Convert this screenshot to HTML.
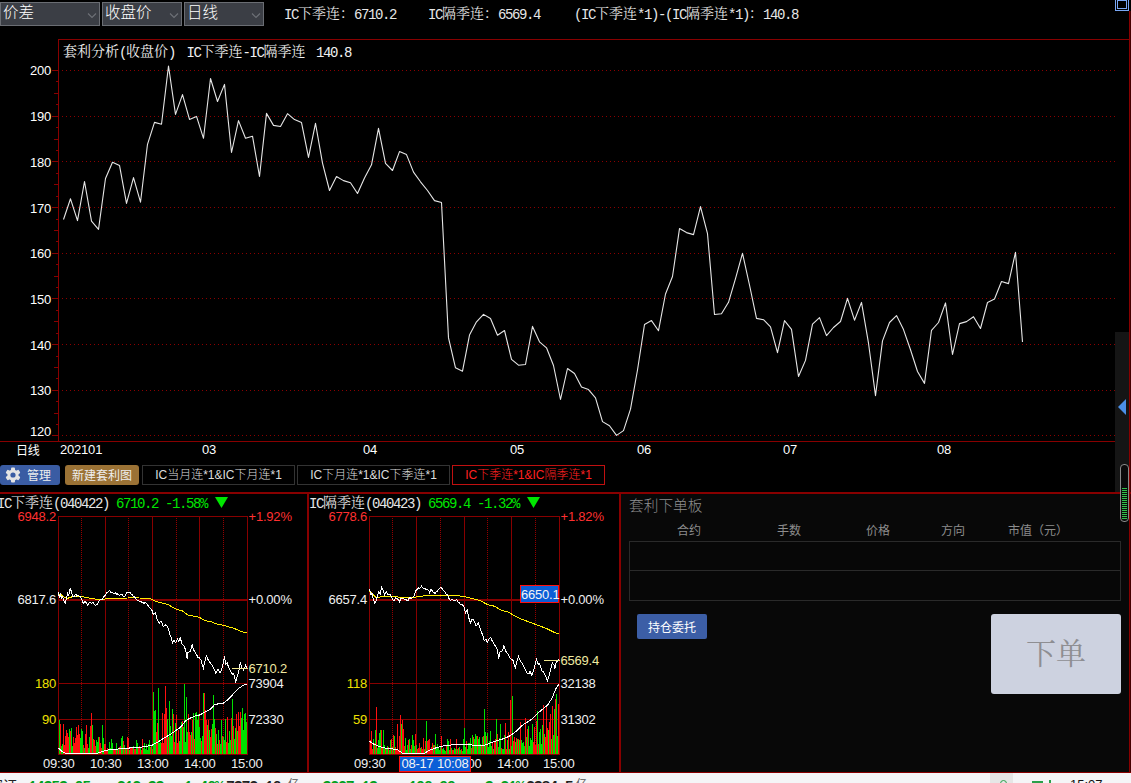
<!DOCTYPE html><html><head><meta charset="utf-8"><title>套利分析</title><style>
html,body{margin:0;padding:0;background:#000;}
body{width:1131px;height:783px;overflow:hidden;position:relative;font-family:"Liberation Sans","Noto Sans CJK SC",sans-serif;color:#fff;}
.t{position:absolute;white-space:nowrap;line-height:1;}
.s{font-family:"Liberation Mono","Noto Serif CJK SC",monospace;font-size:14px;}
.s .a{font-family:"Liberation Mono",monospace;letter-spacing:-1.4px;position:relative;top:1px;}
.ar{font-family:"Liberation Sans","Noto Sans CJK SC",sans-serif;font-size:13px;letter-spacing:-0.2px;}
.sel{position:absolute;top:2px;height:22px;background:#3b3e45;border:1px solid #6a6d73;box-sizing:content-box;font-size:15.5px;line-height:20px;color:#fff;font-weight:300;}
.sel span{position:absolute;left:2px;top:0px;}
.sel svg{position:absolute;right:2px;top:10px;}
.btn{position:absolute;border-radius:2px;font-size:12px;text-align:center;color:#eee;box-sizing:border-box;}
.tab{position:absolute;top:465px;height:20px;box-sizing:border-box;border:1px solid #333;font-size:12px;line-height:19px;text-align:center;color:#ddd;font-weight:300;}
svg.g{position:absolute;left:0;top:0;}
</style></head><body>
<div style="position:absolute;left:621px;top:494px;width:508px;height:278px;background:#080808"></div>
<svg class="g" width="1131" height="783" viewBox="0 0 1131 783" shape-rendering="crispEdges"><line x1="62" x2="1115" y1="70.5" y2="70.5" stroke="#8c0000" stroke-width="1" stroke-dasharray="1 3"/>
<line x1="52" x2="58" y1="70.5" y2="70.5" stroke="#880000" stroke-width="1"/>
<line x1="62" x2="1115" y1="116.5" y2="116.5" stroke="#8c0000" stroke-width="1" stroke-dasharray="1 3"/>
<line x1="52" x2="58" y1="116.5" y2="116.5" stroke="#880000" stroke-width="1"/>
<line x1="56" x2="58" y1="104.5" y2="104.5" stroke="#880000" stroke-width="1"/>
<line x1="54" x2="58" y1="93.5" y2="93.5" stroke="#880000" stroke-width="1"/>
<line x1="56" x2="58" y1="81.5" y2="81.5" stroke="#880000" stroke-width="1"/>
<line x1="62" x2="1115" y1="161.5" y2="161.5" stroke="#8c0000" stroke-width="1" stroke-dasharray="1 3"/>
<line x1="52" x2="58" y1="161.5" y2="161.5" stroke="#880000" stroke-width="1"/>
<line x1="56" x2="58" y1="150.5" y2="150.5" stroke="#880000" stroke-width="1"/>
<line x1="54" x2="58" y1="139.5" y2="139.5" stroke="#880000" stroke-width="1"/>
<line x1="56" x2="58" y1="127.5" y2="127.5" stroke="#880000" stroke-width="1"/>
<line x1="62" x2="1115" y1="207.5" y2="207.5" stroke="#8c0000" stroke-width="1" stroke-dasharray="1 3"/>
<line x1="52" x2="58" y1="207.5" y2="207.5" stroke="#880000" stroke-width="1"/>
<line x1="56" x2="58" y1="196.5" y2="196.5" stroke="#880000" stroke-width="1"/>
<line x1="54" x2="58" y1="184.5" y2="184.5" stroke="#880000" stroke-width="1"/>
<line x1="56" x2="58" y1="173.5" y2="173.5" stroke="#880000" stroke-width="1"/>
<line x1="62" x2="1115" y1="253.5" y2="253.5" stroke="#8c0000" stroke-width="1" stroke-dasharray="1 3"/>
<line x1="52" x2="58" y1="253.5" y2="253.5" stroke="#880000" stroke-width="1"/>
<line x1="56" x2="58" y1="241.5" y2="241.5" stroke="#880000" stroke-width="1"/>
<line x1="54" x2="58" y1="230.5" y2="230.5" stroke="#880000" stroke-width="1"/>
<line x1="56" x2="58" y1="219.5" y2="219.5" stroke="#880000" stroke-width="1"/>
<line x1="62" x2="1115" y1="298.5" y2="298.5" stroke="#8c0000" stroke-width="1" stroke-dasharray="1 3"/>
<line x1="52" x2="58" y1="298.5" y2="298.5" stroke="#880000" stroke-width="1"/>
<line x1="56" x2="58" y1="287.5" y2="287.5" stroke="#880000" stroke-width="1"/>
<line x1="54" x2="58" y1="276.5" y2="276.5" stroke="#880000" stroke-width="1"/>
<line x1="56" x2="58" y1="264.5" y2="264.5" stroke="#880000" stroke-width="1"/>
<line x1="62" x2="1115" y1="344.5" y2="344.5" stroke="#8c0000" stroke-width="1" stroke-dasharray="1 3"/>
<line x1="52" x2="58" y1="344.5" y2="344.5" stroke="#880000" stroke-width="1"/>
<line x1="56" x2="58" y1="333.5" y2="333.5" stroke="#880000" stroke-width="1"/>
<line x1="54" x2="58" y1="321.5" y2="321.5" stroke="#880000" stroke-width="1"/>
<line x1="56" x2="58" y1="310.5" y2="310.5" stroke="#880000" stroke-width="1"/>
<line x1="62" x2="1115" y1="390.5" y2="390.5" stroke="#8c0000" stroke-width="1" stroke-dasharray="1 3"/>
<line x1="52" x2="58" y1="390.5" y2="390.5" stroke="#880000" stroke-width="1"/>
<line x1="56" x2="58" y1="378.5" y2="378.5" stroke="#880000" stroke-width="1"/>
<line x1="54" x2="58" y1="367.5" y2="367.5" stroke="#880000" stroke-width="1"/>
<line x1="56" x2="58" y1="356.5" y2="356.5" stroke="#880000" stroke-width="1"/>
<line x1="62" x2="1115" y1="435.5" y2="435.5" stroke="#8c0000" stroke-width="1" stroke-dasharray="1 3"/>
<line x1="52" x2="58" y1="435.5" y2="435.5" stroke="#880000" stroke-width="1"/>
<line x1="56" x2="58" y1="424.5" y2="424.5" stroke="#880000" stroke-width="1"/>
<line x1="54" x2="58" y1="413.5" y2="413.5" stroke="#880000" stroke-width="1"/>
<line x1="56" x2="58" y1="401.5" y2="401.5" stroke="#880000" stroke-width="1"/>
<line x1="58.5" x2="58.5" y1="39" y2="441" stroke="#880000" stroke-width="1"/>
<line x1="58" x2="1131" y1="39.5" y2="39.5" stroke="#880000" stroke-width="1"/>
<line x1="0" x2="1115" y1="441.5" y2="441.5" stroke="#880000" stroke-width="1"/>
<rect x="1129" y="11" width="1" height="762" fill="#880000"/>
<rect x="1130" y="11" width="1" height="762" fill="#440000"/>
<polyline points="63.5,219.5 70.5,198.8 77.5,220.6 84.5,181.5 91.5,221.1 98.5,229.4 105.5,178.5 112.5,162.2 119.5,165.4 126.5,203.4 133.5,177.6 140.5,202.2 147.5,144.3 154.5,122.4 161.5,124.2 168.5,66.0 175.5,114.4 182.5,94.6 189.5,119.4 196.5,116.4 203.5,138.3 210.5,78.5 217.5,101.5 224.5,84.4 231.5,152.5 238.5,120.6 245.5,138.3 252.5,136.2 259.5,176.5 266.5,113.4 273.5,125.4 280.5,126.5 287.5,113.7 294.5,119.6 301.5,122.6 308.5,157.4 315.5,123.3 322.5,163.1 329.5,190.5 336.5,176.5 343.5,180.6 350.5,182.7 357.5,193.5 364.5,177.9 371.5,164.8 378.5,128.4 385.5,163.4 392.5,170.5 399.5,151.6 406.5,154.6 413.5,172.1 420.5,181.8 427.5,190.5 434.5,200.6 441.5,202.5 448.5,337.9 455.5,367.8 462.5,371.2 469.5,335.1 476.5,321.8 483.5,314.4 490.5,318.5 497.5,335.3 504.5,330.5 511.5,359.3 518.5,365.2 525.5,364.5 532.5,326.4 539.5,341.8 546.5,347.8 553.5,365.5 560.5,399.5 567.5,368.5 574.5,373.5 581.5,386.9 588.5,389.6 595.5,397.9 602.5,421.6 609.5,425.7 616.5,435.4 623.5,430.6 630.5,409.2 637.5,370.0 644.5,324.5 651.5,320.6 658.5,330.7 665.5,294.0 672.5,276.5 679.5,228.6 686.5,232.6 693.5,234.6 700.5,206.6 707.5,233.7 714.5,314.5 721.5,313.8 728.5,302.3 735.5,278.6 742.5,253.3 749.5,285.0 756.5,318.4 763.5,319.7 770.5,326.9 777.5,352.6 784.5,320.6 791.5,329.4 798.5,376.5 805.5,360.4 812.5,324.1 819.5,317.6 826.5,335.6 833.5,327.5 840.5,321.5 847.5,298.3 854.5,320.2 861.5,302.4 868.5,343.2 875.5,395.6 882.5,340.9 889.5,322.5 896.5,315.6 903.5,329.6 910.5,349.8 917.5,371.5 924.5,383.4 931.5,330.3 938.5,322.5 945.5,302.9 952.5,354.5 959.5,323.6 966.5,321.6 973.5,316.7 980.5,328.5 987.5,302.5 994.5,299.0 1001.5,281.5 1008.5,283.6 1015.5,252.3 1022.5,342.0" fill="none" stroke="#e6e6e6" stroke-width="1.1" shape-rendering="geometricPrecision" stroke-linejoin="round"/>
<rect x="1115" y="332" width="14" height="160" fill="#151515"/>
<polygon points="1118,407 1126,399 1126,415" fill="#4a8fe8" shape-rendering="geometricPrecision"/>
<rect x="0" y="492" width="1131" height="2" fill="#880000"/>
<rect x="1120.5" y="464.5" width="8" height="57" rx="3.5" fill="#0a0a0a" stroke="#8a8a8a" stroke-width="1" shape-rendering="geometricPrecision"/>
<rect x="1122" y="488" width="5" height="1" fill="#2fc24a"/>
<rect x="1122" y="490" width="5" height="1" fill="#2fc24a"/>
<rect x="1122" y="492" width="5" height="1" fill="#2fc24a"/>
<rect x="1122" y="494" width="5" height="1" fill="#2fc24a"/>
<rect x="1122" y="496" width="5" height="1" fill="#2fc24a"/>
<rect x="1122" y="498" width="5" height="1" fill="#2fc24a"/>
<rect x="1122" y="500" width="5" height="1" fill="#2fc24a"/>
<rect x="1122" y="502" width="5" height="1" fill="#2fc24a"/>
<rect x="1122" y="504" width="5" height="1" fill="#2fc24a"/>
<rect x="1122" y="506" width="5" height="1" fill="#2fc24a"/>
<rect x="1122" y="508" width="5" height="1" fill="#2fc24a"/>
<rect x="1122" y="510" width="5" height="1" fill="#2fc24a"/>
<rect x="1122" y="512" width="5" height="1" fill="#2fc24a"/>
<rect x="1122" y="514" width="5" height="1" fill="#2fc24a"/>
<rect x="1122" y="516" width="5" height="1" fill="#2fc24a"/>
<rect x="1122" y="518" width="5" height="1" fill="#2fc24a"/>
<rect x="1115.5" y="-0.5" width="13" height="11" fill="none" stroke="#7aa7f5" stroke-width="1"/>
<rect x="1117.5" y="0.5" width="9" height="8" fill="none" stroke="#7aa7f5" stroke-width="1"/>
<line x1="58.5" x2="58.5" y1="516.5" y2="754.5" stroke="#880000" stroke-width="1"/>
<line x1="81.5" x2="81.5" y1="516" y2="754.5" stroke="#940000" stroke-width="1" stroke-dasharray="1 1"/>
<line x1="105.5" x2="105.5" y1="516.5" y2="754.5" stroke="#880000" stroke-width="1"/>
<line x1="128.5" x2="128.5" y1="516" y2="754.5" stroke="#940000" stroke-width="1" stroke-dasharray="1 1"/>
<line x1="152.5" x2="152.5" y1="516.5" y2="754.5" stroke="#880000" stroke-width="1"/>
<line x1="176.5" x2="176.5" y1="516" y2="754.5" stroke="#940000" stroke-width="1" stroke-dasharray="1 1"/>
<line x1="199.5" x2="199.5" y1="516.5" y2="754.5" stroke="#880000" stroke-width="1"/>
<line x1="223.5" x2="223.5" y1="516" y2="754.5" stroke="#940000" stroke-width="1" stroke-dasharray="1 1"/>
<line x1="247.5" x2="247.5" y1="516.5" y2="754.5" stroke="#880000" stroke-width="1"/>
<line x1="58" x2="248" y1="516.5" y2="516.5" stroke="#880000" stroke-width="1"/>
<rect x="58" y="599" width="190" height="2" fill="#880000"/>
<line x1="58" x2="248" y1="683.5" y2="683.5" stroke="#880000" stroke-width="1"/>
<line x1="58" x2="248" y1="719.5" y2="719.5" stroke="#880000" stroke-width="1"/>
<line x1="58" x2="248" y1="754.5" y2="754.5" stroke="#880000" stroke-width="1"/>
<rect x="59" y="720" width="1" height="34" fill="#00e000"/>
<rect x="60" y="724" width="1" height="30" fill="#ff1010"/>
<rect x="61" y="746" width="1" height="8" fill="#00e000"/>
<rect x="62" y="744" width="1" height="10" fill="#00e000"/>
<rect x="63" y="724" width="1" height="30" fill="#ff1010"/>
<rect x="64" y="745" width="1" height="9" fill="#ff1010"/>
<rect x="65" y="736" width="1" height="18" fill="#ff1010"/>
<rect x="66" y="730" width="1" height="24" fill="#ff1010"/>
<rect x="67" y="733" width="1" height="21" fill="#ff1010"/>
<rect x="68" y="737" width="1" height="17" fill="#ff1010"/>
<rect x="69" y="729" width="1" height="25" fill="#00e000"/>
<rect x="70" y="731" width="1" height="23" fill="#ff1010"/>
<rect x="71" y="728" width="1" height="26" fill="#00e000"/>
<rect x="72" y="746" width="1" height="8" fill="#00e000"/>
<rect x="73" y="737" width="1" height="17" fill="#ff1010"/>
<rect x="74" y="743" width="1" height="11" fill="#ff1010"/>
<rect x="75" y="738" width="1" height="16" fill="#ff1010"/>
<rect x="76" y="727" width="1" height="27" fill="#ff1010"/>
<rect x="77" y="735" width="1" height="19" fill="#ff1010"/>
<rect x="78" y="725" width="1" height="29" fill="#ff1010"/>
<rect x="79" y="734" width="1" height="20" fill="#ff1010"/>
<rect x="80" y="738" width="1" height="16" fill="#00e000"/>
<rect x="81" y="729" width="1" height="25" fill="#00e000"/>
<rect x="82" y="731" width="1" height="23" fill="#00e000"/>
<rect x="83" y="745" width="1" height="9" fill="#ff1010"/>
<rect x="84" y="748" width="1" height="6" fill="#00e000"/>
<rect x="85" y="734" width="1" height="20" fill="#ff1010"/>
<rect x="86" y="725" width="1" height="29" fill="#ff1010"/>
<rect x="87" y="744" width="1" height="10" fill="#ff1010"/>
<rect x="88" y="748" width="1" height="6" fill="#00e000"/>
<rect x="89" y="737" width="1" height="17" fill="#00e000"/>
<rect x="90" y="726" width="1" height="28" fill="#ff1010"/>
<rect x="91" y="713" width="1" height="41" fill="#ff1010"/>
<rect x="92" y="725" width="1" height="29" fill="#00e000"/>
<rect x="93" y="739" width="1" height="15" fill="#ff1010"/>
<rect x="94" y="740" width="1" height="14" fill="#ff1010"/>
<rect x="95" y="746" width="1" height="8" fill="#ff1010"/>
<rect x="96" y="740" width="1" height="14" fill="#00e000"/>
<rect x="97" y="742" width="1" height="12" fill="#00e000"/>
<rect x="98" y="737" width="1" height="17" fill="#00e000"/>
<rect x="99" y="737" width="1" height="17" fill="#ff1010"/>
<rect x="100" y="743" width="1" height="11" fill="#ff1010"/>
<rect x="101" y="748" width="1" height="6" fill="#ff1010"/>
<rect x="102" y="725" width="1" height="29" fill="#00e000"/>
<rect x="103" y="738" width="1" height="16" fill="#00e000"/>
<rect x="104" y="744" width="1" height="10" fill="#ff1010"/>
<rect x="105" y="744" width="1" height="10" fill="#ff1010"/>
<rect x="106" y="750" width="1" height="4" fill="#ff1010"/>
<rect x="107" y="748" width="1" height="6" fill="#ff1010"/>
<rect x="108" y="749" width="1" height="5" fill="#00e000"/>
<rect x="109" y="742" width="1" height="12" fill="#00e000"/>
<rect x="110" y="748" width="1" height="6" fill="#00e000"/>
<rect x="111" y="739" width="1" height="15" fill="#00e000"/>
<rect x="112" y="743" width="1" height="11" fill="#00e000"/>
<rect x="113" y="749" width="1" height="5" fill="#ff1010"/>
<rect x="114" y="749" width="1" height="5" fill="#ff1010"/>
<rect x="115" y="749" width="1" height="5" fill="#ff1010"/>
<rect x="116" y="743" width="1" height="11" fill="#00e000"/>
<rect x="117" y="750" width="1" height="4" fill="#ff1010"/>
<rect x="118" y="748" width="1" height="6" fill="#00e000"/>
<rect x="119" y="747" width="1" height="7" fill="#ff1010"/>
<rect x="120" y="746" width="1" height="8" fill="#ff1010"/>
<rect x="121" y="738" width="1" height="16" fill="#00e000"/>
<rect x="122" y="736" width="1" height="18" fill="#00e000"/>
<rect x="123" y="741" width="1" height="13" fill="#ff1010"/>
<rect x="124" y="745" width="1" height="9" fill="#00e000"/>
<rect x="125" y="749" width="1" height="5" fill="#ff1010"/>
<rect x="126" y="748" width="1" height="6" fill="#00e000"/>
<rect x="127" y="737" width="1" height="17" fill="#ff1010"/>
<rect x="128" y="738" width="1" height="16" fill="#ff1010"/>
<rect x="129" y="750" width="1" height="4" fill="#00e000"/>
<rect x="130" y="748" width="1" height="6" fill="#ff1010"/>
<rect x="131" y="747" width="1" height="7" fill="#ff1010"/>
<rect x="132" y="748" width="1" height="6" fill="#ff1010"/>
<rect x="133" y="746" width="1" height="8" fill="#00e000"/>
<rect x="134" y="749" width="1" height="5" fill="#ff1010"/>
<rect x="135" y="749" width="1" height="5" fill="#ff1010"/>
<rect x="136" y="740" width="1" height="14" fill="#00e000"/>
<rect x="137" y="743" width="1" height="11" fill="#00e000"/>
<rect x="138" y="748" width="1" height="6" fill="#ff1010"/>
<rect x="139" y="746" width="1" height="8" fill="#ff1010"/>
<rect x="140" y="747" width="1" height="7" fill="#00e000"/>
<rect x="141" y="750" width="1" height="4" fill="#ff1010"/>
<rect x="142" y="739" width="1" height="15" fill="#ff1010"/>
<rect x="143" y="748" width="1" height="6" fill="#00e000"/>
<rect x="144" y="743" width="1" height="11" fill="#00e000"/>
<rect x="145" y="749" width="1" height="5" fill="#00e000"/>
<rect x="146" y="744" width="1" height="10" fill="#00e000"/>
<rect x="147" y="750" width="1" height="4" fill="#00e000"/>
<rect x="148" y="744" width="1" height="10" fill="#00e000"/>
<rect x="149" y="740" width="1" height="14" fill="#00e000"/>
<rect x="150" y="747" width="1" height="7" fill="#ff1010"/>
<rect x="151" y="746" width="1" height="8" fill="#00e000"/>
<rect x="152" y="749" width="1" height="5" fill="#ff1010"/>
<rect x="153" y="692" width="1" height="62" fill="#00e000"/>
<rect x="154" y="711" width="1" height="43" fill="#00e000"/>
<rect x="155" y="710" width="1" height="44" fill="#00e000"/>
<rect x="156" y="732" width="1" height="22" fill="#ff1010"/>
<rect x="157" y="723" width="1" height="31" fill="#ff1010"/>
<rect x="158" y="688" width="1" height="66" fill="#00e000"/>
<rect x="159" y="743" width="1" height="11" fill="#00e000"/>
<rect x="160" y="742" width="1" height="12" fill="#00e000"/>
<rect x="161" y="743" width="1" height="11" fill="#ff1010"/>
<rect x="162" y="713" width="1" height="41" fill="#ff1010"/>
<rect x="163" y="743" width="1" height="11" fill="#ff1010"/>
<rect x="164" y="714" width="1" height="40" fill="#ff1010"/>
<rect x="165" y="686" width="1" height="68" fill="#ff1010"/>
<rect x="166" y="708" width="1" height="46" fill="#ff1010"/>
<rect x="167" y="719" width="1" height="35" fill="#00e000"/>
<rect x="168" y="737" width="1" height="17" fill="#ff1010"/>
<rect x="169" y="701" width="1" height="53" fill="#00e000"/>
<rect x="170" y="726" width="1" height="28" fill="#00e000"/>
<rect x="171" y="736" width="1" height="18" fill="#00e000"/>
<rect x="172" y="709" width="1" height="45" fill="#00e000"/>
<rect x="173" y="714" width="1" height="40" fill="#ff1010"/>
<rect x="174" y="742" width="1" height="12" fill="#ff1010"/>
<rect x="175" y="723" width="1" height="31" fill="#00e000"/>
<rect x="176" y="715" width="1" height="39" fill="#ff1010"/>
<rect x="177" y="743" width="1" height="11" fill="#ff1010"/>
<rect x="178" y="730" width="1" height="24" fill="#ff1010"/>
<rect x="179" y="741" width="1" height="13" fill="#00e000"/>
<rect x="180" y="727" width="1" height="27" fill="#00e000"/>
<rect x="181" y="722" width="1" height="32" fill="#00e000"/>
<rect x="182" y="721" width="1" height="33" fill="#ff1010"/>
<rect x="183" y="727" width="1" height="27" fill="#00e000"/>
<rect x="184" y="684" width="1" height="70" fill="#00e000"/>
<rect x="185" y="742" width="1" height="12" fill="#00e000"/>
<rect x="186" y="697" width="1" height="57" fill="#00e000"/>
<rect x="187" y="732" width="1" height="22" fill="#00e000"/>
<rect x="188" y="714" width="1" height="40" fill="#ff1010"/>
<rect x="189" y="732" width="1" height="22" fill="#ff1010"/>
<rect x="190" y="735" width="1" height="19" fill="#ff1010"/>
<rect x="191" y="732" width="1" height="22" fill="#00e000"/>
<rect x="192" y="720" width="1" height="34" fill="#ff1010"/>
<rect x="193" y="713" width="1" height="41" fill="#00e000"/>
<rect x="194" y="739" width="1" height="15" fill="#ff1010"/>
<rect x="195" y="713" width="1" height="41" fill="#00e000"/>
<rect x="196" y="712" width="1" height="42" fill="#00e000"/>
<rect x="197" y="720" width="1" height="34" fill="#00e000"/>
<rect x="198" y="714" width="1" height="40" fill="#00e000"/>
<rect x="199" y="727" width="1" height="27" fill="#00e000"/>
<rect x="200" y="738" width="1" height="16" fill="#00e000"/>
<rect x="201" y="741" width="1" height="13" fill="#ff1010"/>
<rect x="202" y="736" width="1" height="18" fill="#00e000"/>
<rect x="203" y="693" width="1" height="61" fill="#00e000"/>
<rect x="204" y="693" width="1" height="61" fill="#ff1010"/>
<rect x="205" y="710" width="1" height="44" fill="#ff1010"/>
<rect x="206" y="720" width="1" height="34" fill="#ff1010"/>
<rect x="207" y="725" width="1" height="29" fill="#00e000"/>
<rect x="208" y="720" width="1" height="34" fill="#ff1010"/>
<rect x="209" y="730" width="1" height="24" fill="#00e000"/>
<rect x="210" y="737" width="1" height="17" fill="#ff1010"/>
<rect x="211" y="729" width="1" height="25" fill="#ff1010"/>
<rect x="212" y="724" width="1" height="30" fill="#00e000"/>
<rect x="213" y="695" width="1" height="59" fill="#00e000"/>
<rect x="214" y="719" width="1" height="35" fill="#00e000"/>
<rect x="215" y="728" width="1" height="26" fill="#ff1010"/>
<rect x="216" y="734" width="1" height="20" fill="#00e000"/>
<rect x="217" y="744" width="1" height="10" fill="#ff1010"/>
<rect x="218" y="730" width="1" height="24" fill="#00e000"/>
<rect x="219" y="740" width="1" height="14" fill="#ff1010"/>
<rect x="220" y="744" width="1" height="10" fill="#00e000"/>
<rect x="221" y="720" width="1" height="34" fill="#00e000"/>
<rect x="222" y="736" width="1" height="18" fill="#ff1010"/>
<rect x="223" y="737" width="1" height="17" fill="#00e000"/>
<rect x="224" y="740" width="1" height="14" fill="#00e000"/>
<rect x="225" y="719" width="1" height="35" fill="#00e000"/>
<rect x="226" y="742" width="1" height="12" fill="#ff1010"/>
<rect x="227" y="717" width="1" height="37" fill="#ff1010"/>
<rect x="228" y="743" width="1" height="11" fill="#00e000"/>
<rect x="229" y="731" width="1" height="23" fill="#00e000"/>
<rect x="230" y="740" width="1" height="14" fill="#00e000"/>
<rect x="231" y="718" width="1" height="36" fill="#ff1010"/>
<rect x="232" y="699" width="1" height="55" fill="#00e000"/>
<rect x="233" y="726" width="1" height="28" fill="#ff1010"/>
<rect x="234" y="739" width="1" height="15" fill="#00e000"/>
<rect x="235" y="728" width="1" height="26" fill="#00e000"/>
<rect x="236" y="714" width="1" height="40" fill="#ff1010"/>
<rect x="237" y="731" width="1" height="23" fill="#00e000"/>
<rect x="238" y="712" width="1" height="42" fill="#ff1010"/>
<rect x="239" y="726" width="1" height="28" fill="#ff1010"/>
<rect x="240" y="712" width="1" height="42" fill="#ff1010"/>
<rect x="241" y="718" width="1" height="36" fill="#00e000"/>
<rect x="242" y="708" width="1" height="46" fill="#00e000"/>
<rect x="243" y="730" width="1" height="24" fill="#00e000"/>
<rect x="244" y="714" width="1" height="40" fill="#00e000"/>
<rect x="245" y="713" width="1" height="41" fill="#00e000"/>
<rect x="246" y="722" width="1" height="32" fill="#00e000"/>
<polyline points="58.4,594.0 62.0,595.2 64.8,597.6 67.6,598.3 71.9,596.9 78.9,596.2 84.5,597.1 91.5,598.5 97.1,599.4 102.8,599.4 109.8,598.3 128.0,598.0 133.7,597.6 139.3,598.0 148.4,598.3 150.0,598.5 157.0,601.8 168.3,604.6 175.3,608.8 182.3,610.9 187.9,615.1 199.2,617.2 204.8,620.7 210.4,621.4 217.4,624.2 223.0,625.2 234.3,628.5 242.7,632.0 246.9,632.7" fill="none" stroke="#ffee00" stroke-width="1" shape-rendering="crispEdges"/>
<polyline points="58.4,591.9 59.2,597.6 60.3,594.0 61.5,598.3 62.7,596.9 64.1,601.1 65.5,603.2 66.5,597.6 67.6,593.3 68.8,595.4 70.2,587.7 71.6,592.6 72.6,596.2 74.0,596.9 75.8,594.0 76.8,596.2 78.6,595.4 80.3,596.9 81.7,599.0 82.7,602.1 83.8,603.2 85.2,601.1 86.4,603.1 87.6,605.3 89.4,602.5 91.2,603.2 92.9,602.5 94.3,604.4 95.7,605.3 96.8,604.7 97.8,603.2 98.9,601.1 99.9,600.4 101.0,599.1 102.1,599.7 103.5,596.9 104.5,596.0 105.6,594.7 106.6,592.9 107.7,592.6 109.5,590.5 111.2,592.6 112.2,592.7 113.3,593.3 114.3,593.8 115.4,592.6 116.4,594.2 117.5,594.0 119.3,595.4 121.0,594.0 122.1,594.3 123.1,596.2 124.5,596.9 125.9,594.0 127.0,592.4 128.0,592.6 129.1,592.0 130.1,592.6 131.2,594.4 132.2,594.7 133.7,596.9 134.7,596.9 135.8,599.0 136.8,599.4 137.9,601.1 138.9,600.6 140.0,601.8 141.0,601.3 142.1,602.5 143.1,602.9 144.2,603.2 145.2,602.5 146.3,603.2 147.3,604.4 148.4,606.0 149.5,607.5 150.5,608.1 151.9,610.9 153.3,614.4 152.1,610.2 153.5,614.4 155.3,613.0 157.0,618.6 158.1,621.6 159.1,623.5 161.0,620.7 162.1,623.4 163.3,626.3 165.2,624.9 166.9,625.6 168.3,628.5 169.7,634.1 171.1,637.6 172.5,643.2 173.9,640.4 175.6,642.5 177.4,639.0 178.8,641.8 180.2,636.9 181.6,643.2 182.7,644.9 183.7,645.3 185.1,648.8 186.2,653.0 187.2,658.7 187.9,652.3 189.0,652.1 190.0,651.6 191.1,648.8 192.1,644.6 193.5,650.2 194.6,651.1 195.6,653.0 196.7,654.9 197.8,657.2 199.2,657.9 200.2,659.2 201.3,660.1 202.3,665.3 203.4,668.5 204.8,661.5 206.5,655.8 208.3,660.1 209.3,661.7 210.4,662.9 211.4,664.2 212.5,665.7 214.3,669.9 216.0,673.4 217.1,670.7 218.1,669.2 219.8,672.7 221.6,669.9 223.0,664.3 224.4,656.5 225.8,664.3 227.2,662.9 228.7,667.8 229.7,669.1 230.8,671.3 232.2,674.1 233.6,673.4 234.6,677.3 235.7,682.5 237.1,676.9 238.8,671.3 240.2,662.9 242.0,667.8 243.4,669.9 244.5,668.5 245.5,665.0 246.9,667.8" fill="none" stroke="#ffffff" stroke-width="1" shape-rendering="crispEdges"/>
<polyline points="58.7,748.3 61.8,751.4 66.3,753.8 96.2,753.8 102.6,751.4 109.8,749.6 122.5,748.7 131.6,747.8 140.6,747.2 146.1,746.5 152.4,745.1 158.8,741.4 166.0,736.9 173.3,732.4 180.5,727.3 185.0,721.5 188.7,718.8 195.0,716.1 200.4,714.8 204.1,712.4 210.4,709.2 214.9,704.3 223.1,703.4 226.7,700.7 231.3,696.1 238.5,688.5 243.9,684.9 247.2,684.3" fill="none" stroke="#ffffff" stroke-width="1" shape-rendering="crispEdges"/>
<line x1="232" x2="248" y1="668.5" y2="668.5" stroke="#f0e68c" stroke-width="1"/>
<line x1="369.5" x2="369.5" y1="516.5" y2="754.5" stroke="#880000" stroke-width="1"/>
<line x1="392.5" x2="392.5" y1="516" y2="754.5" stroke="#940000" stroke-width="1" stroke-dasharray="1 1"/>
<line x1="416.5" x2="416.5" y1="516.5" y2="754.5" stroke="#880000" stroke-width="1"/>
<line x1="440.5" x2="440.5" y1="516" y2="754.5" stroke="#940000" stroke-width="1" stroke-dasharray="1 1"/>
<line x1="464.5" x2="464.5" y1="516.5" y2="754.5" stroke="#880000" stroke-width="1"/>
<line x1="487.5" x2="487.5" y1="516" y2="754.5" stroke="#940000" stroke-width="1" stroke-dasharray="1 1"/>
<line x1="511.5" x2="511.5" y1="516.5" y2="754.5" stroke="#880000" stroke-width="1"/>
<line x1="535.5" x2="535.5" y1="516" y2="754.5" stroke="#940000" stroke-width="1" stroke-dasharray="1 1"/>
<line x1="559.5" x2="559.5" y1="516.5" y2="754.5" stroke="#880000" stroke-width="1"/>
<line x1="369" x2="560" y1="516.5" y2="516.5" stroke="#880000" stroke-width="1"/>
<rect x="369" y="599" width="191" height="2" fill="#880000"/>
<line x1="369" x2="560" y1="683.5" y2="683.5" stroke="#880000" stroke-width="1"/>
<line x1="369" x2="560" y1="719.5" y2="719.5" stroke="#880000" stroke-width="1"/>
<line x1="369" x2="560" y1="754.5" y2="754.5" stroke="#880000" stroke-width="1"/>
<rect x="370" y="740" width="1" height="14" fill="#ff1010"/>
<rect x="371" y="731" width="1" height="23" fill="#ff1010"/>
<rect x="372" y="749" width="1" height="5" fill="#ff1010"/>
<rect x="373" y="739" width="1" height="15" fill="#00e000"/>
<rect x="374" y="743" width="1" height="11" fill="#ff1010"/>
<rect x="375" y="730" width="1" height="24" fill="#00e000"/>
<rect x="376" y="707" width="1" height="47" fill="#ff1010"/>
<rect x="377" y="748" width="1" height="6" fill="#00e000"/>
<rect x="378" y="740" width="1" height="14" fill="#00e000"/>
<rect x="379" y="733" width="1" height="21" fill="#00e000"/>
<rect x="380" y="730" width="1" height="24" fill="#00e000"/>
<rect x="381" y="730" width="1" height="24" fill="#ff1010"/>
<rect x="382" y="747" width="1" height="7" fill="#ff1010"/>
<rect x="383" y="730" width="1" height="24" fill="#00e000"/>
<rect x="384" y="745" width="1" height="9" fill="#00e000"/>
<rect x="385" y="749" width="1" height="5" fill="#ff1010"/>
<rect x="386" y="749" width="1" height="5" fill="#00e000"/>
<rect x="387" y="746" width="1" height="8" fill="#00e000"/>
<rect x="388" y="747" width="1" height="7" fill="#ff1010"/>
<rect x="389" y="750" width="1" height="4" fill="#00e000"/>
<rect x="390" y="740" width="1" height="14" fill="#00e000"/>
<rect x="391" y="739" width="1" height="15" fill="#ff1010"/>
<rect x="392" y="747" width="1" height="7" fill="#00e000"/>
<rect x="393" y="735" width="1" height="19" fill="#ff1010"/>
<rect x="394" y="736" width="1" height="18" fill="#00e000"/>
<rect x="395" y="747" width="1" height="7" fill="#ff1010"/>
<rect x="396" y="750" width="1" height="4" fill="#ff1010"/>
<rect x="397" y="724" width="1" height="30" fill="#ff1010"/>
<rect x="398" y="750" width="1" height="4" fill="#ff1010"/>
<rect x="399" y="736" width="1" height="18" fill="#ff1010"/>
<rect x="400" y="715" width="1" height="39" fill="#ff1010"/>
<rect x="401" y="724" width="1" height="30" fill="#00e000"/>
<rect x="402" y="720" width="1" height="34" fill="#ff1010"/>
<rect x="403" y="729" width="1" height="25" fill="#ff1010"/>
<rect x="404" y="746" width="1" height="8" fill="#ff1010"/>
<rect x="405" y="738" width="1" height="16" fill="#00e000"/>
<rect x="406" y="750" width="1" height="4" fill="#00e000"/>
<rect x="407" y="745" width="1" height="9" fill="#00e000"/>
<rect x="408" y="740" width="1" height="14" fill="#ff1010"/>
<rect x="409" y="739" width="1" height="15" fill="#00e000"/>
<rect x="410" y="749" width="1" height="5" fill="#00e000"/>
<rect x="411" y="745" width="1" height="9" fill="#ff1010"/>
<rect x="412" y="735" width="1" height="19" fill="#00e000"/>
<rect x="413" y="740" width="1" height="14" fill="#00e000"/>
<rect x="414" y="746" width="1" height="8" fill="#00e000"/>
<rect x="415" y="734" width="1" height="20" fill="#ff1010"/>
<rect x="416" y="745" width="1" height="9" fill="#00e000"/>
<rect x="417" y="749" width="1" height="5" fill="#ff1010"/>
<rect x="418" y="748" width="1" height="6" fill="#ff1010"/>
<rect x="419" y="743" width="1" height="11" fill="#ff1010"/>
<rect x="420" y="748" width="1" height="6" fill="#00e000"/>
<rect x="421" y="747" width="1" height="7" fill="#ff1010"/>
<rect x="422" y="749" width="1" height="5" fill="#ff1010"/>
<rect x="423" y="738" width="1" height="16" fill="#ff1010"/>
<rect x="424" y="749" width="1" height="5" fill="#00e000"/>
<rect x="425" y="741" width="1" height="13" fill="#ff1010"/>
<rect x="426" y="721" width="1" height="33" fill="#00e000"/>
<rect x="427" y="741" width="1" height="13" fill="#ff1010"/>
<rect x="428" y="740" width="1" height="14" fill="#ff1010"/>
<rect x="429" y="739" width="1" height="15" fill="#ff1010"/>
<rect x="430" y="750" width="1" height="4" fill="#ff1010"/>
<rect x="431" y="747" width="1" height="7" fill="#ff1010"/>
<rect x="432" y="743" width="1" height="11" fill="#ff1010"/>
<rect x="433" y="745" width="1" height="9" fill="#00e000"/>
<rect x="434" y="745" width="1" height="9" fill="#ff1010"/>
<rect x="435" y="734" width="1" height="20" fill="#00e000"/>
<rect x="436" y="747" width="1" height="7" fill="#00e000"/>
<rect x="437" y="744" width="1" height="10" fill="#00e000"/>
<rect x="438" y="747" width="1" height="7" fill="#00e000"/>
<rect x="439" y="750" width="1" height="4" fill="#00e000"/>
<rect x="440" y="746" width="1" height="8" fill="#00e000"/>
<rect x="441" y="736" width="1" height="18" fill="#ff1010"/>
<rect x="442" y="749" width="1" height="5" fill="#00e000"/>
<rect x="443" y="748" width="1" height="6" fill="#00e000"/>
<rect x="444" y="750" width="1" height="4" fill="#00e000"/>
<rect x="445" y="751" width="1" height="3" fill="#00e000"/>
<rect x="446" y="746" width="1" height="8" fill="#ff1010"/>
<rect x="447" y="739" width="1" height="15" fill="#00e000"/>
<rect x="448" y="741" width="1" height="13" fill="#00e000"/>
<rect x="449" y="750" width="1" height="4" fill="#ff1010"/>
<rect x="450" y="739" width="1" height="15" fill="#ff1010"/>
<rect x="451" y="748" width="1" height="6" fill="#00e000"/>
<rect x="452" y="750" width="1" height="4" fill="#ff1010"/>
<rect x="453" y="750" width="1" height="4" fill="#ff1010"/>
<rect x="454" y="748" width="1" height="6" fill="#00e000"/>
<rect x="455" y="749" width="1" height="5" fill="#00e000"/>
<rect x="456" y="739" width="1" height="15" fill="#ff1010"/>
<rect x="457" y="749" width="1" height="5" fill="#00e000"/>
<rect x="458" y="748" width="1" height="6" fill="#ff1010"/>
<rect x="459" y="747" width="1" height="7" fill="#00e000"/>
<rect x="460" y="750" width="1" height="4" fill="#00e000"/>
<rect x="461" y="749" width="1" height="5" fill="#ff1010"/>
<rect x="462" y="751" width="1" height="3" fill="#00e000"/>
<rect x="463" y="739" width="1" height="15" fill="#00e000"/>
<rect x="464" y="728" width="1" height="26" fill="#00e000"/>
<rect x="465" y="747" width="1" height="7" fill="#00e000"/>
<rect x="466" y="741" width="1" height="13" fill="#ff1010"/>
<rect x="467" y="749" width="1" height="5" fill="#00e000"/>
<rect x="468" y="743" width="1" height="11" fill="#00e000"/>
<rect x="469" y="743" width="1" height="11" fill="#00e000"/>
<rect x="470" y="738" width="1" height="16" fill="#00e000"/>
<rect x="471" y="748" width="1" height="6" fill="#ff1010"/>
<rect x="472" y="735" width="1" height="19" fill="#00e000"/>
<rect x="473" y="737" width="1" height="17" fill="#ff1010"/>
<rect x="474" y="739" width="1" height="15" fill="#00e000"/>
<rect x="475" y="734" width="1" height="20" fill="#00e000"/>
<rect x="476" y="736" width="1" height="18" fill="#00e000"/>
<rect x="477" y="736" width="1" height="18" fill="#ff1010"/>
<rect x="478" y="739" width="1" height="15" fill="#00e000"/>
<rect x="479" y="737" width="1" height="17" fill="#00e000"/>
<rect x="480" y="744" width="1" height="10" fill="#00e000"/>
<rect x="481" y="746" width="1" height="8" fill="#ff1010"/>
<rect x="482" y="737" width="1" height="17" fill="#00e000"/>
<rect x="483" y="736" width="1" height="18" fill="#ff1010"/>
<rect x="484" y="709" width="1" height="45" fill="#00e000"/>
<rect x="485" y="732" width="1" height="22" fill="#00e000"/>
<rect x="486" y="736" width="1" height="18" fill="#ff1010"/>
<rect x="487" y="733" width="1" height="21" fill="#00e000"/>
<rect x="488" y="747" width="1" height="7" fill="#00e000"/>
<rect x="489" y="741" width="1" height="13" fill="#00e000"/>
<rect x="490" y="731" width="1" height="23" fill="#00e000"/>
<rect x="491" y="746" width="1" height="8" fill="#00e000"/>
<rect x="492" y="742" width="1" height="12" fill="#ff1010"/>
<rect x="493" y="749" width="1" height="5" fill="#00e000"/>
<rect x="494" y="742" width="1" height="12" fill="#ff1010"/>
<rect x="495" y="739" width="1" height="15" fill="#ff1010"/>
<rect x="496" y="719" width="1" height="35" fill="#00e000"/>
<rect x="497" y="734" width="1" height="20" fill="#ff1010"/>
<rect x="498" y="747" width="1" height="7" fill="#00e000"/>
<rect x="499" y="738" width="1" height="16" fill="#00e000"/>
<rect x="500" y="724" width="1" height="30" fill="#00e000"/>
<rect x="501" y="748" width="1" height="6" fill="#ff1010"/>
<rect x="502" y="749" width="1" height="5" fill="#00e000"/>
<rect x="503" y="749" width="1" height="5" fill="#00e000"/>
<rect x="504" y="735" width="1" height="19" fill="#00e000"/>
<rect x="505" y="723" width="1" height="31" fill="#ff1010"/>
<rect x="506" y="749" width="1" height="5" fill="#ff1010"/>
<rect x="507" y="740" width="1" height="14" fill="#00e000"/>
<rect x="508" y="732" width="1" height="22" fill="#ff1010"/>
<rect x="509" y="749" width="1" height="5" fill="#00e000"/>
<rect x="510" y="700" width="1" height="54" fill="#ff1010"/>
<rect x="511" y="746" width="1" height="8" fill="#00e000"/>
<rect x="512" y="696" width="1" height="58" fill="#00e000"/>
<rect x="513" y="741" width="1" height="13" fill="#ff1010"/>
<rect x="514" y="737" width="1" height="17" fill="#ff1010"/>
<rect x="515" y="742" width="1" height="12" fill="#00e000"/>
<rect x="516" y="738" width="1" height="16" fill="#ff1010"/>
<rect x="517" y="739" width="1" height="15" fill="#00e000"/>
<rect x="518" y="739" width="1" height="15" fill="#ff1010"/>
<rect x="519" y="740" width="1" height="14" fill="#00e000"/>
<rect x="520" y="722" width="1" height="32" fill="#ff1010"/>
<rect x="521" y="740" width="1" height="14" fill="#00e000"/>
<rect x="522" y="743" width="1" height="11" fill="#00e000"/>
<rect x="523" y="742" width="1" height="12" fill="#00e000"/>
<rect x="524" y="746" width="1" height="8" fill="#00e000"/>
<rect x="525" y="718" width="1" height="36" fill="#ff1010"/>
<rect x="526" y="737" width="1" height="17" fill="#00e000"/>
<rect x="527" y="729" width="1" height="25" fill="#ff1010"/>
<rect x="528" y="726" width="1" height="28" fill="#00e000"/>
<rect x="529" y="746" width="1" height="8" fill="#00e000"/>
<rect x="530" y="738" width="1" height="16" fill="#00e000"/>
<rect x="531" y="740" width="1" height="14" fill="#00e000"/>
<rect x="532" y="724" width="1" height="30" fill="#00e000"/>
<rect x="533" y="742" width="1" height="12" fill="#ff1010"/>
<rect x="534" y="727" width="1" height="27" fill="#ff1010"/>
<rect x="535" y="745" width="1" height="9" fill="#ff1010"/>
<rect x="536" y="721" width="1" height="33" fill="#ff1010"/>
<rect x="537" y="711" width="1" height="43" fill="#00e000"/>
<rect x="538" y="744" width="1" height="10" fill="#ff1010"/>
<rect x="539" y="732" width="1" height="22" fill="#00e000"/>
<rect x="540" y="729" width="1" height="25" fill="#00e000"/>
<rect x="541" y="744" width="1" height="10" fill="#00e000"/>
<rect x="542" y="725" width="1" height="29" fill="#00e000"/>
<rect x="543" y="705" width="1" height="49" fill="#ff1010"/>
<rect x="544" y="734" width="1" height="20" fill="#00e000"/>
<rect x="545" y="737" width="1" height="17" fill="#ff1010"/>
<rect x="546" y="706" width="1" height="48" fill="#ff1010"/>
<rect x="547" y="728" width="1" height="26" fill="#ff1010"/>
<rect x="548" y="730" width="1" height="24" fill="#00e000"/>
<rect x="549" y="722" width="1" height="32" fill="#ff1010"/>
<rect x="550" y="714" width="1" height="40" fill="#ff1010"/>
<rect x="551" y="739" width="1" height="15" fill="#00e000"/>
<rect x="552" y="706" width="1" height="48" fill="#ff1010"/>
<rect x="553" y="735" width="1" height="19" fill="#00e000"/>
<rect x="554" y="709" width="1" height="45" fill="#00e000"/>
<rect x="555" y="699" width="1" height="55" fill="#ff1010"/>
<rect x="556" y="694" width="1" height="60" fill="#00e000"/>
<rect x="557" y="736" width="1" height="18" fill="#00e000"/>
<rect x="558" y="704" width="1" height="50" fill="#ff1010"/>
<polyline points="369.5,591.2 373.4,594.7 376.9,598.2 380.4,596.8 387.5,596.1 400.1,597.2 412.8,597.5 421.2,596.3 428.2,595.4 440.8,595.1 454.9,595.4 461.2,596.1 462.0,596.1 470.4,598.2 480.3,600.6 487.3,604.5 494.3,606.2 501.3,610.1 508.3,612.2 518.2,617.8 523.8,619.9 529.4,622.1 535.0,624.2 540.7,626.3 547.7,629.1 553.3,631.9 557.5,633.7 559.2,633.3" fill="none" stroke="#ffee00" stroke-width="1" shape-rendering="crispEdges"/>
<polyline points="369.5,589.0 370.9,594.7 372.0,593.3 373.1,598.2 374.8,603.1 376.0,601.0 377.4,596.1 378.8,591.9 380.2,594.0 381.6,587.6 383.3,590.4 384.7,594.7 386.3,591.9 388.2,594.7 390.0,594.0 391.7,596.8 392.7,599.7 393.8,601.0 395.6,597.5 397.3,598.9 398.4,599.9 399.4,601.7 401.2,598.2 402.4,598.8 403.6,598.2 404.8,599.9 406.0,599.6 407.8,601.0 408.9,598.8 409.9,597.5 411.0,598.4 412.1,598.2 413.9,596.1 415.6,591.2 416.6,589.7 417.7,589.0 418.7,588.0 419.8,588.3 421.5,586.2 423.3,588.3 424.3,588.4 425.4,589.0 426.4,589.9 427.5,589.7 428.6,590.4 429.6,592.6 431.0,589.0 432.1,590.8 433.1,591.9 434.2,592.6 435.2,594.0 436.3,591.8 437.3,591.2 438.4,589.6 439.4,588.3 440.8,587.4 441.9,588.3 442.9,589.7 444.0,590.7 445.1,591.9 446.1,594.1 447.2,594.7 448.6,597.5 449.6,599.8 450.7,600.3 451.7,599.3 452.8,599.6 453.8,601.0 454.9,600.3 455.9,600.2 457.0,599.6 458.0,602.0 459.1,602.4 460.2,604.1 461.2,604.5 462.0,603.8 463.1,605.6 464.1,607.3 465.5,612.9 467.3,610.1 469.0,618.5 470.4,622.8 472.1,619.2 473.2,619.7 474.4,621.3 476.0,625.6 477.1,625.1 478.2,622.8 479.6,626.3 481.0,631.2 482.8,635.4 484.2,641.0 485.9,638.9 487.3,642.4 489.0,638.9 490.8,637.5 492.2,641.0 494.0,643.8 495.7,646.6 497.4,649.4 498.8,659.3 499.6,652.2 501.6,651.5 502.7,649.8 503.9,645.9 505.5,650.8 506.6,652.5 507.6,653.7 508.7,654.9 509.8,657.9 511.4,659.3 513.3,660.7 514.3,664.9 515.4,667.7 517.1,660.7 518.5,656.5 520.3,660.7 521.3,662.7 522.4,663.5 523.4,666.4 524.5,667.7 526.3,671.9 528.0,674.0 529.1,673.7 530.1,671.2 531.8,675.4 533.6,670.5 535.0,664.9 536.4,659.3 538.1,664.2 539.5,663.5 541.4,669.1 542.4,671.6 543.5,671.9 544.5,674.5 545.6,676.1 547.4,681.0 549.1,675.4 550.8,669.1 552.2,662.8 554.0,664.9 555.0,668.4 556.4,661.4 558.2,660.7 559.2,659.3" fill="none" stroke="#ffffff" stroke-width="1" shape-rendering="crispEdges"/>
<polyline points="369.4,741.1 372.7,743.6 378.1,746.0 383.6,747.8 390.8,748.7 397.2,749.6 403.5,753.8 423.4,753.8 428.9,750.5 436.1,747.8 443.4,746.0 450.6,745.1 457.9,744.2 465.1,744.2 472.4,745.1 485.1,745.1 490.5,742.9 497.8,740.5 505.0,738.2 510.4,735.6 515.9,731.5 521.3,726.0 526.8,722.4 532.2,718.8 537.6,713.3 543.1,708.8 547.6,705.2 552.1,697.9 555.8,688.9 559.0,683.8" fill="none" stroke="#ffffff" stroke-width="1" shape-rendering="crispEdges"/>
<line x1="544" x2="560" y1="660.5" y2="660.5" stroke="#f0e68c" stroke-width="1"/>
<rect x="307" y="494" width="2" height="278" fill="#880000"/>
<rect x="619" y="494" width="2" height="278" fill="#880000"/>
<line x1="0" x2="1131" y1="772.5" y2="772.5" stroke="#880000" stroke-width="1"/></svg>
<div class="sel" style="left:0px;width:98px"><span>价差</span><svg width="10" height="6" viewBox="0 0 10 6"><polyline points="1,0.5 5,4.5 9,0.5" fill="none" stroke="#6e7177" stroke-width="1.1"/></svg></div>
<div class="sel" style="left:102px;width:78px"><span>收盘价</span><svg width="10" height="6" viewBox="0 0 10 6"><polyline points="1,0.5 5,4.5 9,0.5" fill="none" stroke="#6e7177" stroke-width="1.1"/></svg></div>
<div class="sel" style="left:184px;width:78px"><span>日线</span><svg width="10" height="6" viewBox="0 0 10 6"><polyline points="1,0.5 5,4.5 9,0.5" fill="none" stroke="#6e7177" stroke-width="1.1"/></svg></div>
<div class="t s" style="left:284px;top:7px;color:#e6e6e6"><span class="a">IC</span>下季连：<span class="a">6710.2</span></div>
<div class="t s" style="left:428px;top:7px;color:#e6e6e6"><span class="a">IC</span>隔季连：<span class="a">6569.4</span></div>
<div class="t s" style="left:574px;top:7px;color:#e6e6e6"><span class="a">(IC</span>下季连<span class="a">*1)-(IC</span>隔季连<span class="a">*1)</span>：<span class="a">140.8</span></div>
<div class="t s" style="left:63px;top:45px;color:#f0f0f0">套利分析<span class="a">(</span>收盘价<span class="a">)</span><span style="position:absolute;left:123.5px;top:0"><span class="a">IC</span>下季连<span class="a">-IC</span>隔季连</span><span style="position:absolute;left:253px;top:0"><span class="a">140.8</span></span></div>
<div class="t ar" style="left:19px;width:32px;text-align:right;top:64px">200</div>
<div class="t ar" style="left:19px;width:32px;text-align:right;top:110px">190</div>
<div class="t ar" style="left:19px;width:32px;text-align:right;top:156px">180</div>
<div class="t ar" style="left:19px;width:32px;text-align:right;top:202px">170</div>
<div class="t ar" style="left:19px;width:32px;text-align:right;top:247px">160</div>
<div class="t ar" style="left:19px;width:32px;text-align:right;top:293px">150</div>
<div class="t ar" style="left:19px;width:32px;text-align:right;top:339px">140</div>
<div class="t ar" style="left:19px;width:32px;text-align:right;top:384px">130</div>
<div class="t ar" style="left:19px;width:32px;text-align:right;top:425px">120</div>
<div class="t ar" style="left:16px;top:445px;font-size:12px">日线</div>
<div class="t ar" style="left:60px;top:443px">202101</div>
<div class="t ar" style="left:202px;top:443px">03</div>
<div class="t ar" style="left:363px;top:443px">04</div>
<div class="t ar" style="left:510px;top:443px">05</div>
<div class="t ar" style="left:637px;top:443px">06</div>
<div class="t ar" style="left:783px;top:443px">07</div>
<div class="t ar" style="left:937px;top:443px">08</div>
<div class="btn" style="left:0;top:465px;width:60px;height:20px;background:#3a5ca3;line-height:20px;border-radius:3px"><svg width="16" height="16" viewBox="-8 -8 16 16" style="position:absolute;left:5px;top:2px"><g fill="#e4e4e4"><rect x="-2" y="-7.5" width="4" height="15" rx="1" transform="rotate(0)"/><rect x="-2" y="-7.5" width="4" height="15" rx="1" transform="rotate(60)"/><rect x="-2" y="-7.5" width="4" height="15" rx="1" transform="rotate(120)"/><circle r="5.6"/></g><circle r="2.6" fill="#3a5ca3"/></svg><span style="position:absolute;left:27px;top:1px">管理</span></div>
<div class="btn" style="left:65px;top:465px;width:74px;height:20px;background:#9b7235;line-height:22px;border-radius:3px">新建套利图</div>
<div class="tab" style="left:142px;width:153px;">IC当月连*1&amp;IC下月连*1</div>
<div class="tab" style="left:297px;width:153px;">IC下月连*1&amp;IC下季连*1</div>
<div class="tab" style="left:452px;width:153px;border-color:#c01010;color:#ff2020">IC下季连*1&amp;IC隔季连*1</div>
<div class="t s" style="left:-3px;top:496px;color:#e6e6e6"><span class="a">IC</span>下季连<span class="a">(040422)</span><span style="color:#00e600"><span class="a">&nbsp;6710.2&nbsp;-1.58%</span></span></div>
<svg style="position:absolute;left:215px;top:497px" width="13" height="11"><polygon points="0,0 13,0 6.5,11" fill="#00e600"/></svg>
<div class="t ar" style="left:-2px;width:58px;text-align:right;top:510px;color:#ff3030">6948.2</div>
<div class="t ar" style="left:-2px;width:58px;text-align:right;top:593px;color:#f0f0f0">6817.6</div>
<div class="t ar" style="left:-2px;width:58px;text-align:right;top:677px;color:#f0e000">180</div>
<div class="t ar" style="left:-2px;width:58px;text-align:right;top:713px;color:#f0e000">90</div>
<div class="t ar" style="left:248.5px;top:510px;color:#ff3030">+1.92%</div>
<div class="t ar" style="left:248.5px;top:593px;color:#f0f0f0">+0.00%</div>
<div class="t ar" style="left:248.5px;top:662px;color:#efe9a0">6710.2</div>
<div class="t ar" style="left:248.5px;top:677px;color:#f0f0f0">73904</div>
<div class="t ar" style="left:248.5px;top:713px;color:#f0f0f0">72330</div>
<div class="t ar" style="left:43px;top:757px;color:#f0f0f0">09:30</div>
<div class="t ar" style="left:90px;top:757px;color:#f0f0f0">10:30</div>
<div class="t ar" style="left:137px;top:757px;color:#f0f0f0">13:00</div>
<div class="t ar" style="left:184px;top:757px;color:#f0f0f0">14:00</div>
<div class="t ar" style="left:231px;top:757px;color:#f0f0f0">15:00</div>
<div class="t s" style="left:309px;top:496px;color:#e6e6e6"><span class="a">IC</span>隔季连<span class="a">(040423)</span><span style="color:#00e600"><span class="a">&nbsp;6569.4&nbsp;-1.32%</span></span></div>
<svg style="position:absolute;left:527px;top:497px" width="13" height="11"><polygon points="0,0 13,0 6.5,11" fill="#00e600"/></svg>
<div class="t ar" style="left:309px;width:58px;text-align:right;top:510px;color:#ff3030">6778.6</div>
<div class="t ar" style="left:309px;width:58px;text-align:right;top:593px;color:#f0f0f0">6657.4</div>
<div class="t ar" style="left:309px;width:58px;text-align:right;top:677px;color:#f0e000">118</div>
<div class="t ar" style="left:309px;width:58px;text-align:right;top:713px;color:#f0e000">59</div>
<div class="t ar" style="left:560.5px;top:510px;color:#ff3030">+1.82%</div>
<div class="t ar" style="left:560.5px;top:593px;color:#f0f0f0">+0.00%</div>
<div class="t ar" style="left:560.5px;top:654px;color:#efe9a0">6569.4</div>
<div class="t ar" style="left:560.5px;top:677px;color:#f0f0f0">32138</div>
<div class="t ar" style="left:560.5px;top:713px;color:#f0f0f0">31302</div>
<div class="t ar" style="left:354px;top:757px;color:#f0f0f0">09:30</div>
<div class="t ar" style="left:450px;top:757px;color:#f0f0f0">13:00</div>
<div class="t ar" style="left:497px;top:757px;color:#f0f0f0">14:00</div>
<div class="t ar" style="left:543px;top:757px;color:#f0f0f0">15:00</div>
<div class="t ar" style="left:520px;top:585px;width:39px;height:18px;box-sizing:border-box;border:1px solid #ff1010;background:#0b5ed7;color:#f4f4f4;line-height:18px;text-align:center">6650.1</div>
<div class="t ar" style="left:399px;top:756px;width:72px;height:16px;box-sizing:border-box;border:1px solid #ff1010;background:#0b5ed7;color:#f4f4f4;line-height:14px;text-align:center">08-17 10:08</div>
<div class="t" style="left:629px;top:499px;font-size:14.7px;color:#8e8e8e;font-weight:300">套利下单板</div>
<div class="t" style="left:677px;top:525px;font-size:12px;color:#8c8c8c">合约</div>
<div class="t" style="left:777px;top:525px;font-size:12px;color:#8c8c8c">手数</div>
<div class="t" style="left:866px;top:525px;font-size:12px;color:#8c8c8c">价格</div>
<div class="t" style="left:941px;top:525px;font-size:12px;color:#8c8c8c">方向</div>
<div class="t" style="left:1008px;top:525px;font-size:12px;color:#8c8c8c">市值（元）</div>
<div style="position:absolute;left:629px;top:541px;width:492px;height:30px;box-sizing:border-box;border:1px solid #2a2a2a;background:#070707"></div>
<div style="position:absolute;left:629px;top:570px;width:492px;height:31px;box-sizing:border-box;border:1px solid #2a2a2a;background:#070707"></div>
<div class="btn" style="left:637px;top:614px;width:70px;height:25px;background:#3c5ea6;line-height:28px;color:#fff">持仓委托</div>
<div class="btn" style="left:991px;top:614px;width:130px;height:80px;background:#cdd2e0;border-radius:3px;line-height:80px;color:#8e8e92;font-size:30px;font-family:'Liberation Serif','Noto Serif CJK SC',serif">下单</div>
<div style="position:absolute;left:0;top:773px;width:1131px;height:10px;background:#f5f5f7;overflow:hidden"><div class="t" style="left:-11px;top:7px;font-size:14px;font-weight:normal;color:#222;letter-spacing:0px;font-family:'Liberation Mono','Noto Sans CJK SC',monospace">深证</div><div class="t" style="left:28px;top:7px;font-size:15px;font-weight:bold;color:#00a020;letter-spacing:-1.25px;font-family:'Liberation Mono','Noto Sans CJK SC',monospace">14353.05</div><div class="t" style="left:109px;top:7px;font-size:15px;font-weight:bold;color:#00a020;letter-spacing:-1.25px;font-family:'Liberation Mono','Noto Sans CJK SC',monospace">-212.33</div><div class="t" style="left:176px;top:7px;font-size:15px;font-weight:bold;color:#00a020;letter-spacing:-1.25px;font-family:'Liberation Mono','Noto Sans CJK SC',monospace">-1.46%</div><div class="t" style="left:226px;top:7px;font-size:15px;font-weight:bold;color:#222;letter-spacing:-1.25px;font-family:'Liberation Mono','Noto Sans CJK SC',monospace">7372.16</div><div class="t" style="left:288px;top:7px;font-size:11px;font-weight:normal;color:#555;letter-spacing:0px;font-family:'Liberation Mono','Noto Sans CJK SC',monospace">亿</div><div class="t" style="left:322.5px;top:7px;font-size:15px;font-weight:bold;color:#00a020;letter-spacing:-1.25px;font-family:'Liberation Mono','Noto Sans CJK SC',monospace">3227.13</div><div class="t" style="left:400.5px;top:7px;font-size:15px;font-weight:bold;color:#00a020;letter-spacing:-1.25px;font-family:'Liberation Mono','Noto Sans CJK SC',monospace">-106.99</div><div class="t" style="left:477px;top:7px;font-size:15px;font-weight:bold;color:#00a020;letter-spacing:-1.25px;font-family:'Liberation Mono','Noto Sans CJK SC',monospace">-3.21%</div><div class="t" style="left:526px;top:7px;font-size:15px;font-weight:bold;color:#222;letter-spacing:-1.25px;font-family:'Liberation Mono','Noto Sans CJK SC',monospace">2384.5</div><div class="t" style="left:576px;top:7px;font-size:11px;font-weight:normal;color:#555;letter-spacing:0px;font-family:'Liberation Mono','Noto Sans CJK SC',monospace">亿</div><div style="position:absolute;left:990px;top:0;width:23px;height:10px;background:#e6e6e6"></div><div style="position:absolute;left:1000px;top:7px;width:7px;height:7px;border:1.5px solid #2aa04a;border-radius:50%;box-sizing:border-box"></div><div style="position:absolute;left:1032px;top:8px;width:11px;height:2px;background:#2aa04a"></div><div style="position:absolute;left:1049px;top:7px;width:2px;height:3px;background:#2aa04a"></div><div class="t" style="left:1070px;top:5px;font-size:13px;color:#111">15:07</div></div>
</body></html>
